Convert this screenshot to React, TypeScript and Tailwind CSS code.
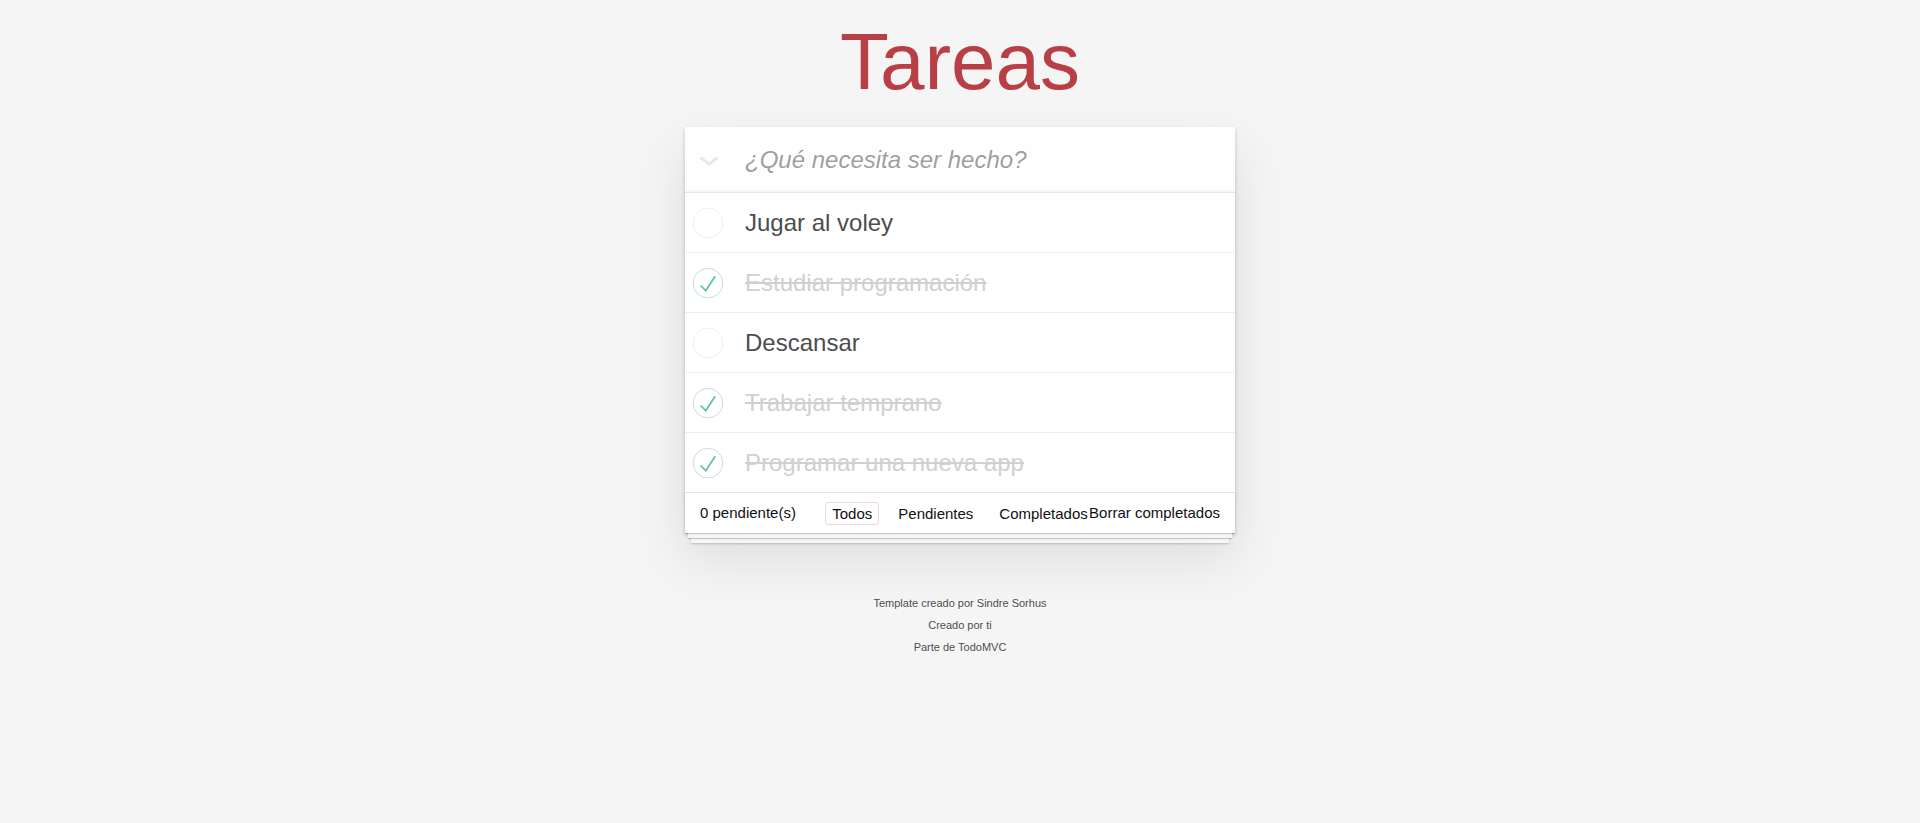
import { useState } from "react";

type Todo = { id: number; title: string; completed: boolean };

const initialTodos: Todo[] = [
  { id: 1, title: "Jugar al voley", completed: false },
  { id: 2, title: "Estudiar programación", completed: true },
  { id: 3, title: "Descansar", completed: false },
  { id: 4, title: "Trabajar temprano", completed: true },
  { id: 5, title: "Programar una nueva app", completed: true },
];

function ToggleIcon({ checked }: { checked: boolean }) {
  return (
    <svg width="40" height="40" viewBox="-10 -18 100 135" className="shrink-0">
      <circle
        cx="50"
        cy="50"
        r="50"
        fill="none"
        stroke={checked ? "#bddad5" : "#ededed"}
        strokeWidth="3"
      />
      {checked && <path fill="#5dc2af" d="M72 25L42 71 27 56l-4 4 20 20 34-52z" />}
    </svg>
  );
}

export default function App() {
  const [todos, setTodos] = useState<Todo[]>(initialTodos);
  const [filter, setFilter] = useState("Todos");

  const toggle = (id: number) =>
    setTodos((list) => list.map((t) => (t.id === id ? { ...t, completed: !t.completed } : t)));

  const filters = ["Todos", "Pendientes", "Completados"];

  return (
    <div className="min-h-screen bg-[#f5f5f5] font-['Liberation_Sans',Arial,sans-serif] text-[14px] text-[#111111]">
      <div className="mx-auto w-[550px] pt-[22px]">
        {/* Title */}
        <h1 className="text-center text-[80px] leading-[80px] font-normal text-[#b83f45]">Tareas</h1>

        {/* App card */}
        <section className="mt-[25px] bg-white shadow-[0_2px_4px_0_rgba(0,0,0,0.2),0_25px_50px_0_rgba(0,0,0,0.1)]">
          <header className="flex h-[65px] items-center bg-[rgba(0,0,0,0.003)] shadow-[inset_0_-2px_1px_rgba(0,0,0,0.03)]">
            <div className="flex w-[60px] shrink-0 pl-[14px]">
              <svg width="20" height="10" viewBox="0 0 20 10" className="mt-[2px]">
                <polyline points="1.5,1.5 10,8 18.5,1.5" fill="none" stroke="#e6e6e6" strokeWidth="2.6" />
              </svg>
            </div>
            <input
              className="h-full flex-1 bg-transparent pr-4 text-[24px] text-[#4d4d4d] outline-none placeholder:italic placeholder:text-[rgba(0,0,0,0.4)]"
              placeholder="¿Qué necesita ser hecho?"
            />
          </header>

          <ul className="border-t border-[#e6e6e6]">
            {todos.map((todo) => (
              <li
                key={todo.id}
                className="flex h-[60px] items-center border-b border-[#ededed] last:h-[59px] last:border-b-0"
                onClick={() => toggle(todo.id)}
              >
                <div className="flex w-[60px] shrink-0 items-center">
                  <ToggleIcon checked={todo.completed} />
                </div>
                <span
                  className={
                    todo.completed
                      ? "text-[24px] leading-[29px] text-[#d0d0d0] line-through"
                      : "text-[24px] leading-[29px] text-[#4d4d4d]"
                  }
                >
                  {todo.title}
                </span>
              </li>
            ))}
          </ul>

          {/* Footer with stacked paper effect */}
          <footer className="grid h-[41px] grid-cols-[minmax(0,1fr)_auto_minmax(0,1fr)] items-center border-t border-[#e6e6e6] px-[15px] text-[15px] leading-[20px] shadow-[0_1px_1px_rgba(0,0,0,0.2),0_8px_0_-3px_#f6f6f6,0_9px_1px_-3px_rgba(0,0,0,0.2),0_16px_0_-6px_#f6f6f6,0_17px_2px_-6px_rgba(0,0,0,0.2)]">
            <span className="whitespace-nowrap">0 pendiente(s)</span>
            <ul className="flex items-center gap-[12px]">
              {filters.map((f) => (
                <li key={f}>
                  <button
                    onClick={() => setFilter(f)}
                    className={
                      filter === f
                        ? "rounded-[3px] border border-[rgba(175,47,47,0.2)] px-[6px] py-[2px] leading-[17px]"
                        : "rounded-[3px] border border-transparent px-[6px] py-[2px] leading-[17px]"
                    }
                  >
                    {f}
                  </button>
                </li>
              ))}
            </ul>
            <div className="flex min-w-0 justify-end">
              <button className="shrink-0 whitespace-nowrap">Borrar completados</button>
            </div>
          </footer>
        </section>

        {/* Info */}
        <div className="mt-[65px] text-center text-[11px] leading-[11px] text-[#4d4d4d] [text-shadow:0_1px_0_rgba(255,255,255,0.5)]">
          <p>Template creado por Sindre Sorhus</p>
          <p className="mt-[11px]">Creado por ti</p>
          <p className="mt-[11px]">Parte de TodoMVC</p>
        </div>
      </div>
    </div>
  );
}
